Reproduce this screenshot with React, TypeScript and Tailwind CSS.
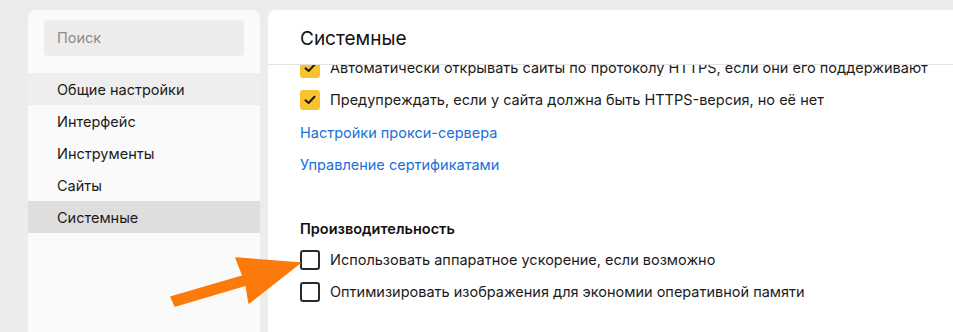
import React from "react";

const navItems = [
  { label: "Общие настройки", state: "hover" },
  { label: "Интерфейс", state: "" },
  { label: "Инструменты", state: "" },
  { label: "Сайты", state: "" },
  { label: "Системные", state: "active" },
];

const CheckBox: React.FC<{ checked?: boolean }> = ({ checked }) =>
  checked ? (
    <span className="flex h-[20px] w-[20px] shrink-0 items-center justify-center rounded-[3px] bg-[#fac32d]">
      <svg width="12" height="10" viewBox="0 0 12 10" fill="none">
        <path
          d="M1.5 5.2 L4.6 8 L10.5 1.8"
          stroke="#1a1a1a"
          strokeWidth="2"
          strokeLinecap="round"
          strokeLinejoin="round"
        />
      </svg>
    </span>
  ) : (
    <span className="h-[20px] w-[20px] shrink-0 rounded-[3px] border-2 border-[#2b2b2b] bg-white" />
  );

const Row: React.FC<{ checked?: boolean; children: React.ReactNode }> = ({
  checked,
  children,
}) => (
  <div className="flex h-[32px] items-center gap-[10px]">
    <CheckBox checked={checked} />
    <span className="whitespace-nowrap text-[14.5px] text-[#1b1b1b]">{children}</span>
  </div>
);

const App: React.FC = () => {
  return (
    <div
      className="relative flex h-[332px] w-[953px] gap-[8px] overflow-hidden bg-[#edecea] pl-[28px] pt-[10px]"
      style={{ fontFamily: '"Inter", "Noto Sans", sans-serif' }}
    >
      {/* Боковое меню */}
      <aside className="w-[232px] shrink-0 rounded-t-[8px] bg-[#fafafa]">
        <div className="px-[16px] pt-[10px] pb-[17px]">
          <div className="flex h-[36px] items-center rounded-[4px] bg-[#ececea] px-[13px] text-[14.5px] text-[#8a8a8a]">
            Поиск
          </div>
        </div>
        <nav className="flex flex-col">
          {navItems.map((item) => (
            <div
              key={item.label}
              className={`flex h-[32px] items-center px-[29px] pt-[2px] text-[14.5px] text-[#1b1b1b] ${
                item.state === "active"
                  ? "bg-[#dedede]"
                  : item.state === "hover"
                  ? "bg-[#eeeeee]"
                  : ""
              }`}
            >
              {item.label}
            </div>
          ))}
        </nav>
      </aside>

      {/* Основная панель */}
      <main className="flex min-w-0 flex-1 flex-col rounded-tl-[8px] bg-white">
        <div className="flex h-[55px] shrink-0 items-center border-b border-[#e2e2e2] px-[32px] pt-[5px]">
          <h1 className="text-[19px] text-[#111111]">Системные</h1>
        </div>
        <div className="flex-1 overflow-hidden">
          <div className="-mt-[13px] px-[32px]">
            <Row checked>
              Автоматически открывать сайты по протоколу HTTPS, если они его поддерживают
            </Row>
            <Row checked>Предупреждать, если у сайта должна быть HTTPS-версия, но её нет</Row>
            <div className="flex h-[32px] items-center pt-[2px] text-[14.5px] text-[#1a6fd8]">
              Настройки прокси-сервера
            </div>
            <div className="flex h-[32px] items-center pt-[2px] text-[14.5px] text-[#1a6fd8]">
              Управление сертификатами
            </div>
            <div className="flex h-[64px] items-end pb-[4px] text-[14.5px] font-semibold text-[#111111]">
              Производительность
            </div>
            <Row>Использовать аппаратное ускорение, если возможно</Row>
            <Row>Оптимизировать изображения для экономии оперативной памяти</Row>
          </div>
        </div>
      </main>

      {/* Стрелка-указатель */}
      <svg
        className="pointer-events-none absolute left-0 top-0"
        width="953"
        height="332"
        viewBox="0 0 953 332"
      >
        <polygon
          points="171,297 243,276 236,258 300,263 249,303 246,285 175,306"
          fill="#fc7a0c"
          stroke="#fc7a0c"
          strokeWidth="1.5"
          strokeLinejoin="round"
        />
      </svg>
    </div>
  );
};

export default App;
